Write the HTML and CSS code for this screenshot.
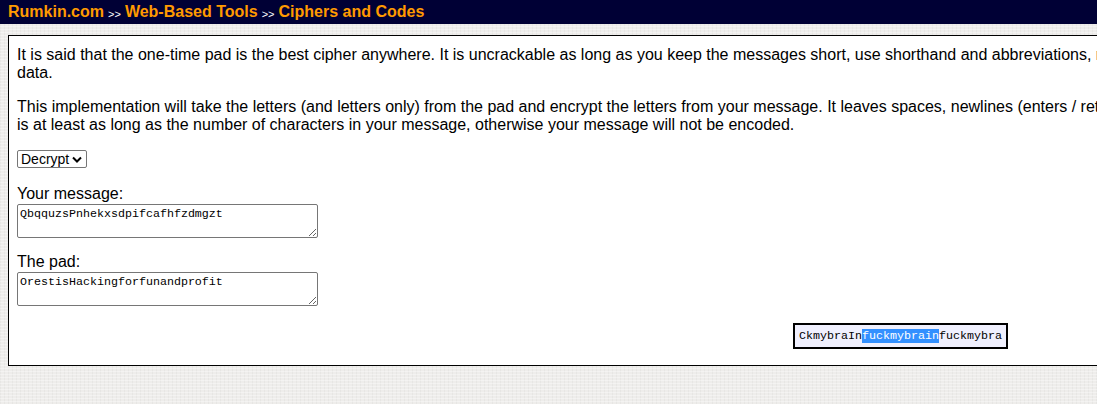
FILE: index.html
```html
<!DOCTYPE html>
<html>
<head>
<meta charset="utf-8">
<title>One-Time Pad</title>
<link rel="stylesheet" href="styles.css">
</head>
<body>
<div class="topbar">
  <a class="crumb" href="#">Rumkin.com</a><span class="sep">&gt;&gt;</span><a class="crumb" href="#">Web-Based Tools</a><span class="sep">&gt;&gt;</span><a class="crumb" href="#">Ciphers and Codes</a>
</div>
<div class="main">
  <p class="para">It is said that the one-time pad is the best cipher anywhere. It is uncrackable as long as you keep the messages short, use shorthand and abbreviations, remove unnecessary letters, never reuse a pad, and have a good enough random source for<br>data.</p>
  <p class="para">This implementation will take the letters (and letters only) from the pad and encrypt the letters from your message. It leaves spaces, newlines (enters / returns), numbers, and punctuation alone. Make sure that your pad<br>is at least as long as the number of characters in your message, otherwise your message will not be encoded.</p>
  <div class="field field-select">
    <select class="mode">
      <option>Encrypt</option>
      <option selected>Decrypt</option>
    </select>
  </div>
  <div class="field">
    <label class="label">Your message:</label>
    <textarea class="box">QbqquzsPnhekxsdpifcafhfzdmgzt</textarea>
  </div>
  <div class="field">
    <label class="label">The pad:</label>
    <textarea class="box">OrestisHackingforfunandprofit</textarea>
  </div>
  <div class="result-row">
    <span class="result">CkmybraIn<span class="hl">fuckmybrain</span>fuckmybra</span>
  </div>
</div>
</body>
</html>
```

FILE: styles.css
```css
html {
  overflow: hidden;
}
body {
  margin: 0;
  font-family: "Liberation Sans", Arial, sans-serif;
  font-size: 16px;
  color: #000;
  background-color: #eeedeb;
  background-image:
    repeating-linear-gradient(0deg, rgba(255,255,255,0.35) 0 1px, transparent 1px 3px),
    repeating-linear-gradient(90deg, rgba(0,0,0,0.03) 0 1px, transparent 1px 4px);
  width: 1810px;
}
.topbar {
  background: #000035;
  height: 24px;
  padding-left: 8px;
  display: flex;
  align-items: center;
  white-space: nowrap;
}
.crumb {
  color: #ff9a00;
  font-weight: bold;
  font-size: 16px;
  text-decoration: none;
  line-height: 18px;
}
.sep {
  color: #ffffff;
  font-size: 11px;
  margin: 3px 4px 0 4px;
}
.main {
  margin: 11px 0 0 8px;
  width: 1767px;
  background: #ffffff;
  border: 1px solid #000;
  padding: 10px 8px 0 8px;
}
.para {
  margin: 0 0 16px 0;
  line-height: 18px;
  white-space: nowrap;
}
.field {
  margin-bottom: 0;
}
.field-select {
  margin-bottom: 17px;
}
.mode {
  appearance: none;
  -webkit-appearance: none;
  font-family: "Liberation Sans", Arial, sans-serif;
  font-size: 14px;
  color: #000;
  border: 1px solid #767676;
  border-radius: 2px;
  background: #fff url("data:image/svg+xml,%3Csvg xmlns='http://www.w3.org/2000/svg' width='10' height='7' viewBox='0 0 10 7'%3E%3Cpath d='M1 1.5 L5 5.5 L9 1.5' fill='none' stroke='%23000' stroke-width='2'/%3E%3C/svg%3E") no-repeat right 4px center;
  height: 18px;
  width: 70px;
  padding: 0 0 0 3px;
  margin: 2px 0 0 0;
  display: block;
  line-height: 16px;
}
.label {
  display: block;
  line-height: 18px;
  margin-top: 15px;
}
.box {
  display: block;
  width: 301px;
  height: 34px;
  box-sizing: border-box;
  border: 1px solid #767676;
  border-radius: 2px;
  padding: 2px 2px;
  margin-top: 1px;
  font-family: "Liberation Mono", "Courier New", monospace;
  font-size: 11.67px;
  line-height: 14px;
  color: #000;
  resize: both;
}
.result-row {
  display: flex;
  justify-content: center;
  padding: 17px 0 16px 0;
}
.result {
  display: inline-block;
  background: #f0f0fe;
  border: 2px solid #000;
  padding: 3px 4px;
  font-family: "Liberation Mono", "Courier New", monospace;
  font-size: 11.67px;
  line-height: 16px;
  white-space: nowrap;
}
.hl {
  background: #3390ff;
  color: #fff;
}
```
